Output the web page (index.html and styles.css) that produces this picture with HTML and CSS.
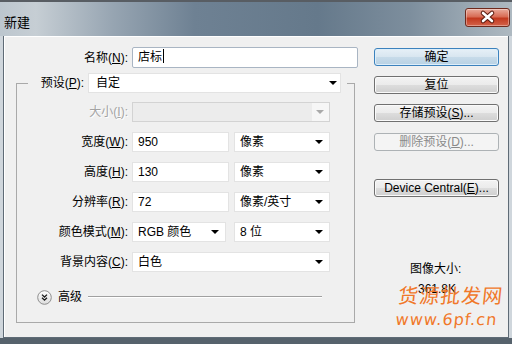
FILE: index.html
```html
<!DOCTYPE html>
<html lang="zh-CN">

<head>
    <meta charset="UTF-8">
    <title>新建</title>
    <link rel="stylesheet" href="styles.css">
</head>

<body>
    <div class="window">
        <div class="titlebar">
            <span class="title">新建</span>
            <button class="close">
                <svg width="45" height="19" viewBox="0 0 45 19">
                    <path d="M18 5 L27 13 M27 5 L18 13" stroke="#5a1a0e" stroke-width="4.6" stroke-linecap="round" />
                    <path d="M18 5 L27 13 M27 5 L18 13" stroke="#ffffff" stroke-width="2.6" stroke-linecap="round" />
                </svg>
            </button>
        </div>

        <div class="frame">
            <div class="client">
                <div class="form">
                    <div class="row">
                        <span class="label">名称(<u>N</u>):</span>
                        <div class="field name-field">店标<span class="caret"></span></div>
                    </div>

                    <fieldset class="group">
                        <legend class="legend">
                            <span class="label legend-label">预设(<u>P</u>):</span>
                            <div class="field select preset">自定</div>
                        </legend>

                        <div class="row inner">
                            <span class="label off">大小(<u>I</u>):</span>
                            <div class="field select off-field wide"></div>
                        </div>
                        <div class="row inner">
                            <span class="label">宽度(<u>W</u>):</span>
                            <div class="field short">950</div>
                            <div class="field select unit">像素</div>
                        </div>
                        <div class="row inner">
                            <span class="label">高度(<u>H</u>):</span>
                            <div class="field short">130</div>
                            <div class="field select unit">像素</div>
                        </div>
                        <div class="row inner">
                            <span class="label">分辨率(<u>R</u>):</span>
                            <div class="field short">72</div>
                            <div class="field select unit">像素/英寸</div>
                        </div>
                        <div class="row inner">
                            <span class="label">颜色模式(<u>M</u>):</span>
                            <div class="field select mode">RGB 颜色</div>
                            <div class="field select unit">8 位</div>
                        </div>
                        <div class="row inner">
                            <span class="label">背景内容(<u>C</u>):</span>
                            <div class="field select wide">白色</div>
                        </div>

                        <div class="advanced">
                            <svg class="expand" width="15" height="15" viewBox="0 0 15 15">
                                <defs>
                                    <linearGradient id="g" x1="0" y1="0" x2="0" y2="1">
                                        <stop offset="0" stop-color="#ffffff" />
                                        <stop offset="1" stop-color="#dcdcdc" />
                                    </linearGradient>
                                </defs>
                                <circle cx="7.5" cy="7.5" r="6.8" fill="url(#g)" stroke="#8e8e8e" />
                                <path d="M5 4.6 L7.5 7 L10 4.6 M5 7.8 L7.5 10.2 L10 7.8" fill="none" stroke="#1a1a1a" stroke-width="1.3" />
                            </svg>
                            <span>高级</span>
                            <span class="rule"></span>
                        </div>
                    </fieldset>
                </div>

                <div class="buttons">
                    <button class="btn default">确定</button>
                    <button class="btn">复位</button>
                    <button class="btn gap-s">存储预设(<u>S</u>)...</button>
                    <button class="btn off-btn gap-m">删除预设(<u>D</u>)...</button>
                    <button class="btn gap-l">Device Central(<u>E</u>)...</button>
                    <div class="image-size">图像大小:</div>
                    <div class="image-value">361.8K</div>
                </div>

                <div class="watermark">
                    <div class="wm-cn">货源批发网</div>
                    <div class="wm-url">www.6pf.cn</div>
                </div>
            </div>
        </div>
        <div class="bottom"></div>
    </div>
</body>

</html>
```

FILE: styles.css
```css
html,
body {
    margin: 0px;
    padding: 0px;
}

body {
    background-color: #cfd6dc;
    color: black;
    font-family: "Liberation Sans", "Noto Sans CJK SC", sans-serif;
    font-size: 12px;
    line-height: 16px;
}

.window {
    width: 512px;
    height: 344px;
    display: flex;
    flex-direction: column;
}

/* title bar */

.titlebar {
    height: 36px;
    box-sizing: border-box;
    border-top: 2px solid #585d63;
    display: flex;
    justify-content: space-between;
    align-items: flex-start;
    background: linear-gradient(to right, #bcc6ce 0%, #c6ced4 7%, #97a5b2 22%, #6e8193 38%, #65798b 62%, #7d8e9d 80%, #a0adb7 94%, #aeb9c1 100%);
}

.title {
    margin-top: 13px;
    margin-left: 4px;
    font-size: 13px;
    color: #000;
}

.close {
    margin-top: 6px;
    margin-right: 2px;
    width: 45px;
    height: 19px;
    padding: 0px;
    border: 1px solid #6e2a1e;
    border-radius: 3px;
    background: linear-gradient(#e9ab9c 0%, #d86c55 45%, #c2391f 55%, #d4634a 100%);
    box-shadow: inset 0 0 0 1px rgba(255, 255, 255, 0.35);
    display: flex;
    align-items: center;
    justify-content: center;
}

.close svg {
    display: block;
    margin: -1px;
}

/* frame and client area */

.frame {
    padding: 0px 3px;
}

.client {
    position: relative;
    height: 302px;
    box-sizing: border-box;
    padding: 11px 0px 0px 12px;
    background-color: #f0f0f0;
    border: 1px solid #5f6b76;
    border-top: none;
    box-shadow: inset 1px 1px 0 #ffffff;
    display: flex;
    align-items: flex-start;
    gap: 16px;
}

.bottom {
    flex: 1;
    background-color: #56626c;
}

/* form */

.form {
    width: 342px;
}

.row {
    display: flex;
    align-items: center;
}

.label {
    width: 112px;
    margin-right: 4px;
    text-align: right;
    white-space: nowrap;
}

.inner .label {
    width: 111px;
}

.inner {
    margin-top: 10px;
}

.legend + .inner {
    margin-top: 9px;
}

.off {
    color: #a3a3a3;
    text-shadow: 1px 1px 0 #ffffff;
}

.field {
    position: relative;
    height: 20px;
    box-sizing: border-box;
    padding: 0px 5px;
    line-height: 18px;
    background-color: #ffffff;
    border: 1px solid #e3e3e3;
    white-space: nowrap;
}

.name-field {
    width: 226px;
    height: 21px;
    line-height: 19px;
    border-color: #a9b5c3;
    border-radius: 2px;
}

.caret {
    display: inline-block;
    width: 1px;
    height: 14px;
    margin-left: 1px;
    vertical-align: -2px;
    background-color: #000;
}

.select::after {
    content: "";
    position: absolute;
    right: 6px;
    top: 7px;
    border-left: 4px solid transparent;
    border-right: 4px solid transparent;
    border-top: 4px solid #000;
}

.preset {
    width: 253px;
    padding-left: 7px;
}

.preset::after {
    right: 3px;
}

.wide {
    width: 198px;
}

.short {
    width: 97px;
    margin-right: 5px;
}

.unit {
    width: 96px;
}

.mode {
    width: 94px;
    margin-right: 8px;
}

.off-field {
    background-color: #ececec;
    border-color: #d3d3d3;
}

.off-field::before {
    content: "";
    position: absolute;
    right: 0px;
    top: 0px;
    bottom: 0px;
    width: 17px;
    background-color: #f6f6f6;
}

.off-field::after {
    right: 5px;
    border-top-color: #a9a9a9;
}

/* group box */

.group {
    width: 339px;
    box-sizing: border-box;
    margin: 5px 0px 0px 0px;
    padding: 0px 0px 17px 0px;
    border: 1px solid #a9a9a9;
    min-width: 0px;
}

.legend {
    display: flex;
    align-items: center;
    margin-left: 11px;
    padding: 0px 6px 0px 0px;
}

.legend-label {
    width: 56px;
    margin-right: 4px;
}

.advanced {
    margin-top: 17px;
    margin-left: 20px;
    margin-right: 32px;
    height: 16px;
    display: flex;
    align-items: center;
}

.expand {
    display: block;
    margin-right: 6px;
}

.rule {
    flex: 1;
    margin-left: 6px;
    height: 1px;
    background-color: #a0a0a0;
    border-bottom: 1px solid #ffffff;
}

/* buttons */

.buttons {
    width: 125px;
    padding-top: 1px;
    display: flex;
    flex-direction: column;
    gap: 10px;
}

.btn {
    height: 18px;
    width: 100%;
    padding: 0px;
    font: inherit;
    line-height: 15px;
    color: #000;
    border: 1px solid #707070;
    border-radius: 3px;
    background: linear-gradient(#f3f3f3 0%, #ebebeb 50%, #dddddd 51%, #cfcfcf 100%);
    box-shadow: inset 0 0 0 1px #fafafa;
}

.default {
    border-color: #3c82bd;
    background: linear-gradient(#e6f0f7 0%, #d8e6f0 50%, #c7dbe9 51%, #b8d1e4 100%);
    box-shadow: inset 0 0 0 1px #ddeefa;
}

.gap-m {
    margin-top: 1px;
}

.gap-l {
    margin-top: 18px;
}

.off-btn {
    color: #8a8a8a;
    border-color: #adb2b5;
    background: #f4f4f4;
    box-shadow: none;
}

.image-size {
    margin-top: 54px;
    margin-left: 36px;
}

.image-value {
    margin-left: 44px;
    margin-top: -6px;
}

/* watermark */

.watermark {
    position: absolute;
    left: 393px;
    top: 246px;
    color: #f0782a;
    font-family: "Noto Sans CJK SC", sans-serif;
    transform: skewX(-6deg);
}

.wm-cn {
    font-size: 20px;
    line-height: 26px;
    letter-spacing: 1px;
}

.wm-url {
    font-family: "DejaVu Sans", sans-serif;
    font-size: 16px;
    line-height: 24px;
    letter-spacing: 1px;
}
```
